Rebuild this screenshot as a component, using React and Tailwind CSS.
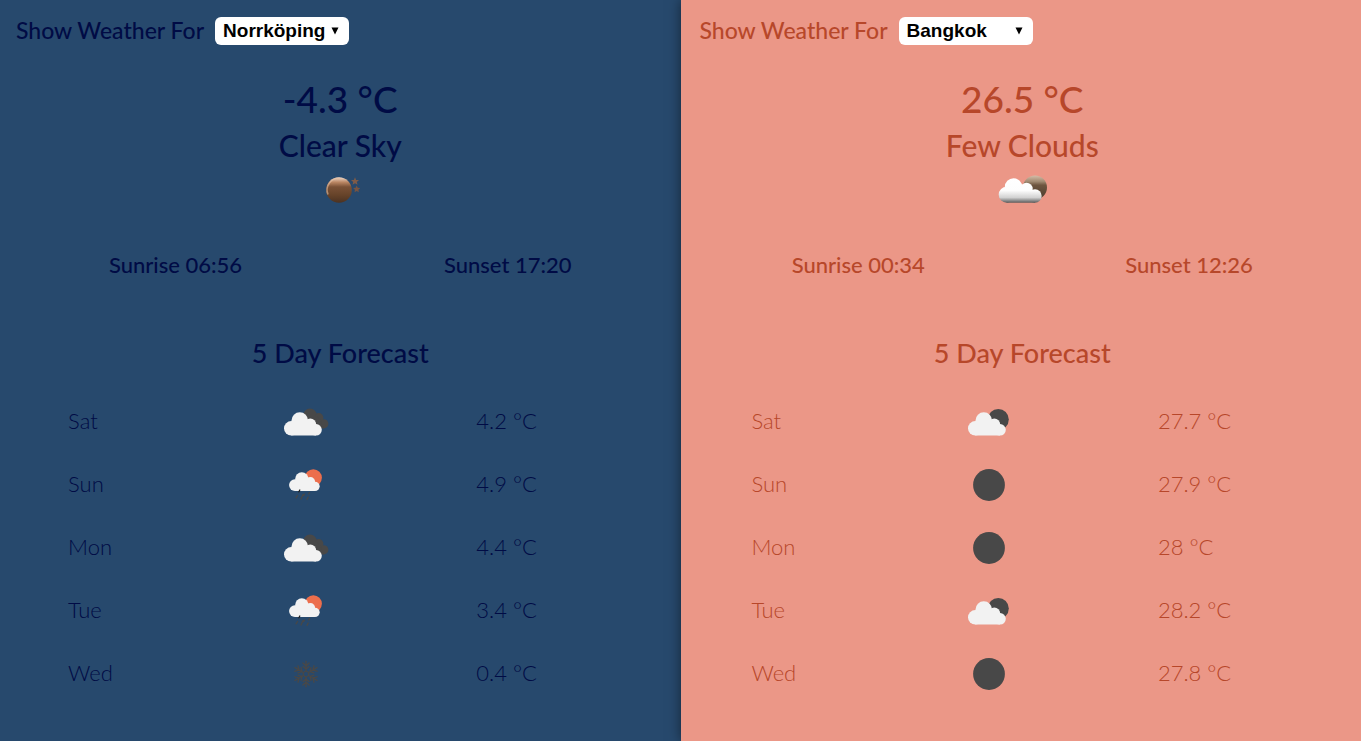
import { useState } from "react";

const CITIES = ["Norrköping", "Bangkok"];

function CurrentClear() {
  return (
    <svg viewBox="46 98 68 44" className="h-11 w-[68px]" role="img" aria-label="Clear sky">
      <defs>
        <linearGradient id="moonBody" x1="0" y1="0" x2="0" y2="1">
          <stop offset="0" stopColor="#f0d8c8" />
          <stop offset="0.2" stopColor="#b98562" />
          <stop offset="0.38" stopColor="#7a5136" />
          <stop offset="0.7" stopColor="#664329" />
          <stop offset="1" stopColor="#4b3222" />
        </linearGradient>
      </defs>
      <circle cx="79" cy="120" r="12.8" fill="url(#moonBody)" />
      <path d="M68 124.500 A11.6 11.6 0 0 1 80 108.4" fill="none" stroke="#e6bfa4" strokeWidth="1.6" opacity=".6" />
      <path d="M95 107.2l1.100 2.700 2.900.2-2.200 1.900.7 2.800-2.500-1.500-2.500 1.500.7-2.800-2.200-1.900 2.900-.2z" fill="#7e5b48" />
      <path d="M96.7 115.500l1 2.300 2.500.3-1.800 1.700.4 2.500-2.100-1.200-2.200 1.200.4-2.500-1.800-1.700 2.500-.3z" fill="#775442" />
    </svg>
  );
}

function CurrentFewClouds() {
  return (
    <svg viewBox="58 98 68 44" className="h-11 w-[68px]" role="img" aria-label="Few clouds">
      <defs>
        <linearGradient id="duskBody" x1="0" y1="0" x2="0" y2="1">
          <stop offset="0" stopColor="#d5bda8" />
          <stop offset="0.25" stopColor="#a08a72" />
          <stop offset="0.4" stopColor="#6e5640" />
          <stop offset="1" stopColor="#4a3a2c" />
        </linearGradient>
        <linearGradient id="cloudBody" gradientUnits="userSpaceOnUse" x1="0" y1="108" x2="0" y2="133">
          <stop offset="0" stopColor="#ffffff" />
          <stop offset="0.5" stopColor="#fdfdfd" />
          <stop offset="0.78" stopColor="#d2d2d2" />
          <stop offset="0.9" stopColor="#8e8e8e" />
          <stop offset="1" stopColor="#555555" />
        </linearGradient>
      </defs>
      <circle cx="105" cy="117.5" r="12" fill="url(#duskBody)" />
      <g fill="url(#cloudBody)">
        <circle cx="76.700" cy="124.700" r="8" />
        <circle cx="83.500" cy="117" r="8.700" />
        <circle cx="96.500" cy="119" r="6.200" />
        <circle cx="105" cy="126" r="6.700" />
        <path d="M76.700 117H98L105 122V132.700H76.700z" />
      </g>
    </svg>
  );
}

function WhiteCloud({ transform }) {
  return (
    <g fill="#f2f2f2" transform={transform}>
      <circle cx="21.300" cy="28.300" r="7.300" />
      <circle cx="29.800" cy="20.600" r="8.300" />
      <circle cx="40.300" cy="24.300" r="5.900" />
      <circle cx="46" cy="29.800" r="5.800" />
      <path d="M21.300 22H42L46 26V35.600H21.300z" />
    </g>
  );
}

function BrokenClouds() {
  return (
    <svg viewBox="2 -9 68 60" className="h-[60px] w-[68px]" role="img" aria-label="Broken clouds">
      <g fill="#484848">
        <circle cx="40" cy="15.600" r="7" />
        <circle cx="48.800" cy="17.700" r="4.600" />
        <circle cx="53.800" cy="23.800" r="4.600" />
        <path d="M34 16H46L50 19 53.800 28.400H40z" />
      </g>
      <WhiteCloud />
    </svg>
  );
}

function SunRain() {
  return (
    <svg viewBox="2 54 68 60" className="h-[60px] w-[68px]" role="img" aria-label="Rain">
      <circle cx="43.300" cy="77.800" r="8.600" fill="#ec6e4c" />
      <WhiteCloud transform="translate(7.700 62.200) scale(.81)" />
      <g stroke="#484848" strokeWidth="1.300" strokeLinecap="round">
        <path d="M29.800 90l-.9 1.800" stroke="#222" />
        <path d="M27.500 95.500l-1.400 2.300M33 94.500l-2 4.500M38.200 97l-1.200 2.500M34.500 94l-.8 1.500M39.500 92.500l-.8 1.500" />
      </g>
    </svg>
  );
}

function Snow() {
  return (
    <svg viewBox="2 53 68 60" className="h-[60px] w-[68px]" role="img" aria-label="Snow">
      <g fill="none" stroke="#484848" strokeWidth="1.400" strokeLinecap="round" strokeLinejoin="round">
        <path d="M36 81l2.600 1.500v3L36 87l-2.600-1.500v-3z" />
        {[0, 60, 120, 180, 240, 300].map((angle) => (
          <path key={angle} d="M36 81V71.300M36 76l-3.100-3M36 76l3.100-3M36 79.300l-3-2.700M36 79.300l3-2.700" transform={`rotate(${angle} 36 84)`} />
        ))}
      </g>
    </svg>
  );
}

function FewClouds() {
  return (
    <svg viewBox="6 -9 68 60" className="h-[60px] w-[68px]" role="img" aria-label="Few clouds">
      <circle cx="49.300" cy="19.500" r="10.500" fill="#484848" />
      <WhiteCloud transform="translate(5 0)" />
    </svg>
  );
}

function Clear() {
  return (
    <svg viewBox="6 54 68 60" className="h-[60px] w-[68px]" role="img" aria-label="Clear sky">
      <circle cx="40" cy="85" r="15.900" fill="#484848" />
    </svg>
  );
}

function CityPicker({ id, initial }) {
  const [city, setCity] = useState(initial);
  return (
    <div className="flex h-[62px] items-center gap-[11px] px-4">
      <label htmlFor={id} className="pb-0.5 text-[23px] font-medium whitespace-nowrap">
        Show Weather For
      </label>
      <div className="relative">
        <select
          id={id}
          value={city}
          onChange={(e) => setCity(e.target.value)}
          className="block h-7 w-[134px] appearance-none rounded-md bg-white pl-2 font-['Liberation_Sans',Arial,sans-serif] text-[19px] leading-7 font-bold text-black"
        >
          {CITIES.map((name) => (
            <option key={name}>{name}</option>
          ))}
        </select>
        <svg viewBox="0 0 8 8" className="pointer-events-none absolute top-[10px] right-[10px] size-2" aria-hidden="true">
          <path d="M.5 .5h7L4 7.500z" fill="#000" />
        </svg>
      </div>
    </div>
  );
}

function WeatherPanel({ id, city, temperature, description, icon, sunrise, sunset, forecast, className }) {
  return (
    <section className={className}>
      <CityPicker id={id} initial={city} />
      <div className="mt-[14px] flex flex-col items-center text-center font-medium">
        <p className="text-[37px] leading-[46px]">{temperature} °C</p>
        <p className="text-[30px] leading-[46px]">{description}</p>
        {icon}
      </div>
      <div className="mt-[37px] flex justify-around px-2 text-[22px] leading-8 font-medium">
        <p>Sunrise {sunrise}</p>
        <p>Sunset {sunset}</p>
      </div>
      <h2 className="mt-14 text-center text-[27px] leading-8 font-medium">5 Day Forecast</h2>
      <table className="mx-auto mt-5 w-[90%] table-fixed text-[22px] font-light">
        <tbody>
          {forecast.map(([day, Icon, temp]) => (
            <tr key={day} className="h-[63px]">
              <th scope="row" className="p-0 pl-[34px] text-left font-light">{day}</th>
              <td className="p-0 pl-[34px]"><Icon /></td>
              <td className="p-0 pl-[34px]">{temp} °C</td>
            </tr>
          ))}
        </tbody>
      </table>
    </section>
  );
}

export default function App() {
  return (
    <main className="grid min-h-screen grid-cols-2 font-[Lato,sans-serif]">
      <WeatherPanel
        id="city-left"
        className="bg-[#27496d] text-[#000b45]"
        city="Norrköping"
        temperature="-4.3"
        description="Clear Sky"
        icon={<CurrentClear />}
        sunrise="06:56"
        sunset="17:20"
        forecast={[
          ["Sat", BrokenClouds, "4.2"],
          ["Sun", SunRain, "4.9"],
          ["Mon", BrokenClouds, "4.4"],
          ["Tue", SunRain, "3.4"],
          ["Wed", Snow, "0.4"],
        ]}
      />
      <WeatherPanel
        id="city-right"
        className="border-l-[3px] border-[#eb9787] bg-[#eb9787] text-[#b7472a] shadow-[0_0_12px_rgba(0,0,0,0.5)]"
        city="Bangkok"
        temperature="26.5"
        description="Few Clouds"
        icon={<CurrentFewClouds />}
        sunrise="00:34"
        sunset="12:26"
        forecast={[
          ["Sat", FewClouds, "27.7"],
          ["Sun", Clear, "27.9"],
          ["Mon", Clear, "28"],
          ["Tue", FewClouds, "28.2"],
          ["Wed", Clear, "27.8"],
        ]}
      />
    </main>
  );
}
